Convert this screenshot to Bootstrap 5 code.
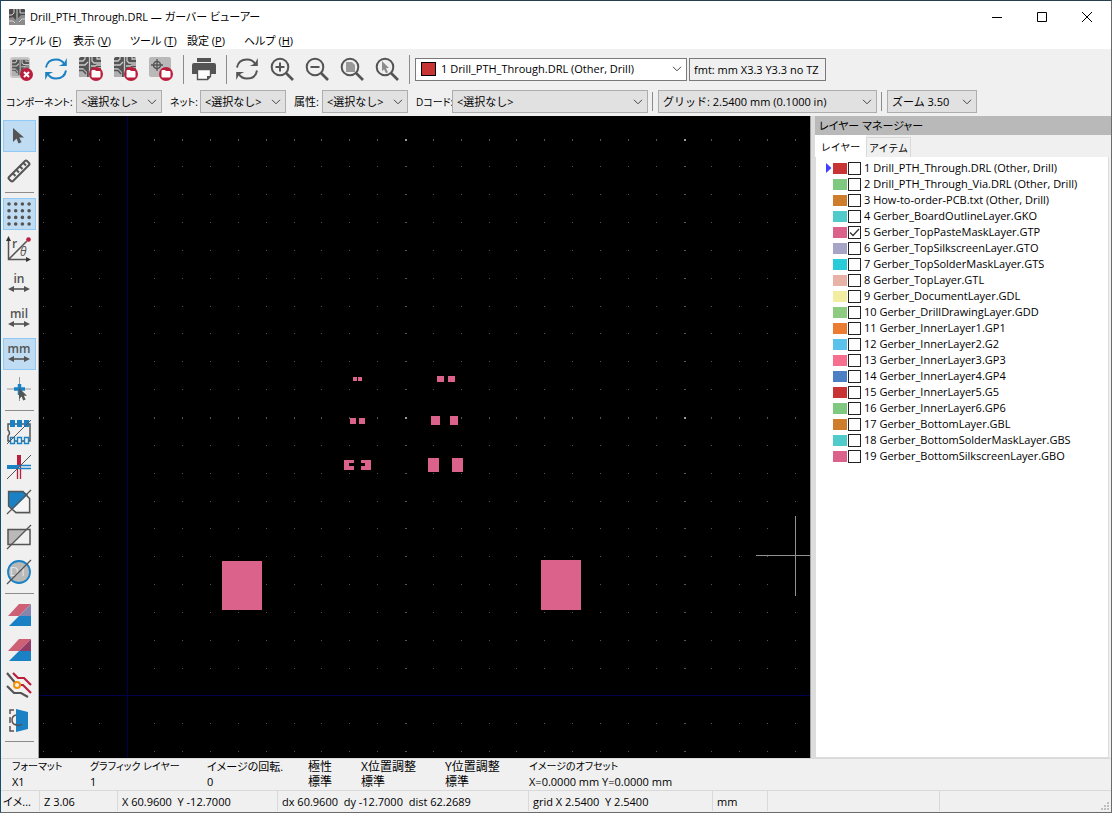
<!DOCTYPE html>
<html lang="ja">
<head>
<meta charset="utf-8">
<meta name="viewport" content="width=device-width, initial-scale=1">
<title>Drill_PTH_Through.DRL — ガーバー ビューアー</title>
<link href="https://cdn.jsdelivr.net/npm/bootstrap@5.3.0/dist/css/bootstrap.min.css" rel="stylesheet">
<style>
  body { font-family: "Open Sans", "Noto Sans CJK JP", sans-serif; font-size: 11px; line-height: 16px; color: #000; background: #f0f0f0; font-feature-settings: "palt"; }
  .app-window { height: 100vh; border: 1px solid #6b6b6b; border-left-color: #14506e; border-top-color: #24404e; overflow: hidden; }
  .text-kana { font-size: 10px; } .text-kanji { font-size: 12px; }
  .title-row { height: 31px; padding-left: 8px; gap: 5px; }
  .win-buttons { margin-right: 2px; }
  .win-btn { width: 45px; height: 28px; border: 0; background: none; padding: 0; display: flex; align-items: center; justify-content: center; }
  .menu-row { height: 17px; line-height: 18px; padding-left: 7px; }
  .menu-row a { color: #000; text-decoration: none; white-space: nowrap; }
  .menu-row .m-wide { width: 65px; } .menu-row .m-std { width: 57px; }
  .tool-row { height: 40px; padding-left: 4px; }
  .tool-group { gap: 2px; }
  .tool-btn { width: 33px; height: 32px; padding: 0 1px 0 0; border: 1px solid transparent; border-radius: 0; background: none; display: flex; align-items: center; justify-content: center; flex: none; }
  .tool-btn.active { background: #c0dcf3; border-color: #90c8f6; }
  .tool-btn svg { width: 24px; height: 24px; overflow: visible; }
  .v-rule { width: 1px; background: #8c8c8c; flex: none; }
  .tool-row .v-rule { height: 29px; margin: 0 4px 0 5px; }
  .filter-row { height: 27px; padding: 0 0 2px 5px; }
  .filter-row label { white-space: nowrap; flex: none; }
  .filter-row .v-rule { height: 19px; margin: 0 5px 0 4px; }
  .win-select { font-size: 11px; line-height: 16px; color: #000; height: 23px; padding: 0 20px 0 4px; border: 1px solid #adadad; border-radius: 0; background-color: #e1e1e1; background-size: 10px 6px; background-position: right 4px center; flex: none;
    background-image: url("data:image/svg+xml,%3Csvg xmlns='http://www.w3.org/2000/svg' viewBox='0 0 10 6'%3E%3Cpath d='M1 .8l4 4 4-4' fill='none' stroke='%23444'/%3E%3C/svg%3E"); }
  .w-pick { width: 86px; } .w-code { width: 196px; } .w-grid { width: 219px; } .w-zoom { width: 90px; } .w-layer { width: 272px; }
  .win-select.w-layer { background-color: #fff; border-color: #7a7a7a; padding-left: 25px; }
  .layer-pick { position: relative; margin: 0 2px 0 1px; }
  .layer-pick i { position: absolute; left: 6px; top: 4px; width: 15px; height: 14px; background: #c83434; border: 1px solid #000; }
  .fmt-box { font-size: 11px; width: 137px; height: 23px; border: 1px solid #7a7a7a; background: #f0f0f0; padding: 0 4px; border-radius: 0; color: #000; }
  .side-bar { width: 38px; padding: 4px 0 0 2px; border-right: 1px solid #a0a0a0; gap: 3px; flex: none; }
  .side-bar hr { width: 29px; height: 1px; margin: 2px 0 2px 2px; border: 0; background: #8c8c8c; opacity: 1; flex: none; }
  .board { background: #000; min-width: 0; overflow: hidden; border-right: 1px solid #a0a0a0; }
  .board svg { display: block; width: 100%; height: 100%; }
  .splitter { width: 4px; background: #dcdcdc; flex: none; }
  .manager { width: 296px; flex: none; }
  .manager h2 { font-size: 11px; line-height: 19px; background: #b9b9b9; margin: 0; padding-left: 4px; font-weight: 400; }
  .tab-strip { height: 22px; }
  .tab-strip .nav-link { color: #000; border-radius: 0; padding: 0; line-height: 20px; width: 45px; height: 20px; background: #f0f0f0; border: 1px solid #d9d9d9; border-bottom: 0; font-size: 10px; }
  .tab-strip .nav-link.active { background: #fff; width: 51px; height: 22px; border-color: #fff; }
  .layer-pane { background: #fff; border: 1px solid #dcdcdc; border-top: 0; padding-top: 3px; margin-right: 2px; min-height: 0; overflow: hidden; }
  .layer-item { height: 16px; padding-left: 10px; white-space: nowrap; }
  .layer-item .mark-col { width: 7px; display: flex; flex: none; }
  .layer-item .chip { width: 14px; height: 11px; margin-right: 1px; flex: none; }
  .layer-item input { appearance: none; width: 13px; height: 13px; margin: 0 3px 0 0; border: 1px solid #222; background: #fff; flex: none; }
  .layer-item input:checked { background: #fff url("data:image/svg+xml,%3Csvg xmlns='http://www.w3.org/2000/svg' viewBox='0 0 11 11'%3E%3Cpath d='M1 5.5l3 3 6-6.500' fill='none' stroke='%23333' stroke-width='1.300'/%3E%3C/svg%3E"); }
  .info-row { height: 32px; border-top: 1px solid #d9d9d9; padding: 0 0 0 11px; line-height: 15px; white-space: nowrap; }
  .info-row dl { margin: 0; flex: none; } .info-row dt { font-weight: 400; } .info-row dd { margin: 0; }
  .i-78 { width: 78px; } .i-117 { width: 117px; } .i-101 { width: 101px; } .i-53 { width: 53px; } .i-84 { width: 84px; }
  .status-row { height: 22px; border-top: 1px solid #d9d9d9; line-height: 22px; white-space: pre; position: relative; }
  .status-row span { padding-left: 4px; border-right: 1px solid #d9d9d9; height: 20px; flex: none; overflow: hidden; }
  .s-39 { width: 39px; } .s-78 { width: 78px; } .s-160 { width: 160px; } .s-251 { width: 251px; } .s-184 { width: 184px; } .s-55 { width: 55px; } .s-172 { width: 172px; }
  .status-row .s-39 { padding-left: 2px; }
  .grip { position: absolute; right: 2px; bottom: 1px; width: 9px; height: 9px; }
</style>
</head>
<body>
<svg width="0" height="0" class="position-absolute" aria-hidden="true">
  <symbol id="pcb" viewBox="0 0 22 20"><rect width="22" height="20" rx="2" fill="#545454"/><path d="M0 11h4l4 4v5H2q-2 0-2-2zM13 13l3-3h6v10h-9z" fill="#b0b0b0"/><path d="M10.500 0v20M0 4h4l2-2V0M0 8h6l3-3M13 0v4l2 2h7M18 0v2h4M12 9h4l2-1h4" fill="none" stroke="#c8c8c8" stroke-width="1.300"/><path d="M0 13.500h4l3 3.500M12 18v-3l3-3h7" fill="none" stroke="#545454" stroke-width="1.500"/></symbol>
  <symbol id="folder" viewBox="0 0 14 14"><circle cx="7" cy="7" r="7" fill="#ba1e3c"/><path d="M2.500 4q0-1 1-1h2.500l1 1H10.500q1 0 1 1V9.500q0 1-1 1h-7q-1 0-1-1z" fill="#fff"/></symbol>
  <symbol id="cycle" viewBox="0 0 24 24"><path d="M2 10.500C3 5 7 2.500 12 2.500c4 0 7 2 8.500 5M22 13.500c-1 5.500-5 8-10 8-4 0-7-2-8.500-5" fill="none" stroke="currentColor" stroke-width="2"/><path d="M22.800 1v8h-8l5-2.500zM1.200 23v-8h8l-5 2.500z" fill="currentColor"/></symbol>
  <symbol id="lens" viewBox="0 0 24 24"><circle cx="10" cy="10" r="8.300" fill="none" stroke="#545454" stroke-width="2"/><path d="M16 16l7 7" stroke="#545454" stroke-width="2.600"/></symbol>
  <symbol id="span" viewBox="0 0 24 8"><path d="M4 4h16" stroke="#545454" stroke-width="1.600"/><path d="M1 4l6-3v6zM23 4l-6-3v6z" fill="#545454"/></symbol>
</svg>

<div class="app-window d-flex flex-column">
  <header class="bg-white">
    <div class="title-row d-flex align-items-center">
      <svg width="16" height="16"><rect width="16" height="16" rx="1" fill="#4a4a4a"/><path d="M0 9l4-1 3 3v5H0zM9 9l3-3h4v10H9z" fill="#8b8b8b"/><path d="M8 0v16M0 6h3l2-2V0M11 0v4h5M0 12h4l2 2M10 13l3-3h3" fill="none" stroke="#d5d5d5"/></svg>
      <span>Drill_PTH_Through.DRL — ガーバー ビューアー</span>
      <div class="win-buttons ms-auto d-flex">
        <button class="win-btn" aria-label="最小化"><svg width="10" height="10"><path d="M0 5.500h10" stroke="#000"/></svg></button>
        <button class="win-btn" aria-label="最大化"><svg width="10" height="10"><path d="M.5.500h9v9h-9z" fill="none" stroke="#000"/></svg></button>
        <button class="win-btn" aria-label="閉じる"><svg width="10" height="10"><path d="M0 0l10 10M10 0L0 10" stroke="#000"/></svg></button>
      </div>
    </div>
    <nav class="menu-row d-flex">
      <a class="m-wide" href="#">ファイル (<u>F</u>)</a><a class="m-std" href="#">表示 (<u>V</u>)</a><a class="m-std" href="#">ツール (<u>T</u>)</a><a class="m-std" href="#">設定 (<u>P</u>)</a><a href="#">ヘルプ (<u>H</u>)</a>
    </nav>
  </header>

  <div class="tool-row d-flex align-items-center" role="toolbar">
    <div class="tool-group d-flex">
      <button class="tool-btn" aria-label="全レイヤーをクリア"><svg viewBox="0 0 24 24"><rect x="1" width="20" height="21" rx="3" fill="#c8c8c8"/><use href="#pcb" x="3" y="2" width="17" height="17"/><circle cx="17.500" cy="17.500" r="6.500" fill="#ba1e3c"/><path d="M15 15l5 5M20 15l-5 5" stroke="#fff" stroke-width="2"/></svg></button>
      <button class="tool-btn" aria-label="再読み込み" style="color:#1a81c4"><svg><use href="#cycle"/></svg></button>
      <button class="tool-btn" aria-label="ガーバーを開く"><svg viewBox="0 0 24 24"><use href="#pcb" width="22" height="20"/><use href="#folder" x="10" y="10" width="14" height="14"/></svg></button>
      <button class="tool-btn" aria-label="ジョブを開く"><svg viewBox="0 0 24 24"><use href="#pcb" width="22" height="20"/><use href="#folder" x="10" y="10" width="14" height="14"/></svg></button>
      <button class="tool-btn" aria-label="ドリルを開く"><svg viewBox="0 0 24 24"><rect width="22" height="20" rx="2" fill="#b9b9b9"/><circle cx="8" cy="8" r="3.500" fill="none" stroke="#545454" stroke-width="1.500"/><path d="M8 2v12M2 8h12" stroke="#545454" stroke-width="1.300"/><use href="#folder" x="10" y="10" width="14" height="14"/></svg></button>
    </div>
    <span class="v-rule"></span>
    <button class="tool-btn" aria-label="印刷"><svg viewBox="0 0 24 24"><path d="M5 1h14v4H5zM2 6h20q2 0 2 2v9h-5v-4H5v4H0V8q0-2 2-2z" fill="#545454"/><path d="M5.500 12.500h13v7l-3 3h-10z" fill="#fff" stroke="#545454" stroke-width="1.400"/><path d="M15 23v-4h4z" fill="#545454"/></svg></button>
    <span class="v-rule"></span>
    <div class="tool-group d-flex">
      <button class="tool-btn" aria-label="再描画" style="color:#545454"><svg><use href="#cycle"/></svg></button>
      <button class="tool-btn" aria-label="ズームイン"><svg viewBox="0 0 24 24"><use href="#lens"/><path d="M10 5.500v9M5.500 10h9" stroke="#545454" stroke-width="2"/></svg></button>
      <button class="tool-btn" aria-label="ズームアウト"><svg viewBox="0 0 24 24"><use href="#lens"/><path d="M5.500 10h9" stroke="#545454" stroke-width="2"/></svg></button>
      <button class="tool-btn" aria-label="全体表示"><svg viewBox="0 0 24 24"><path d="M6 5h6l3 3v7H6z" fill="#999"/><use href="#lens"/></svg></button>
      <button class="tool-btn" aria-label="選択範囲にズーム"><svg viewBox="0 0 24 24"><path d="M7 4l7 7-3 .3 2 4-2 1-2-4-2 2z" fill="#8c8c8c"/><use href="#lens"/></svg></button>
    </div>
    <span class="v-rule"></span>
    <div class="layer-pick"><i></i><select class="form-select win-select w-layer" aria-label="アクティブ レイヤー"><option>1 Drill_PTH_Through.DRL (Other, Drill)</option></select></div>
    <input class="fmt-box" type="text" readonly aria-label="フォーマット" value="fmt: mm X3.3 Y3.3 no TZ">
  </div>

  <div class="filter-row d-flex align-items-center">
    <label for="cmp" class="text-kana" style="width:70px">コンポーネント:</label><select id="cmp" class="form-select win-select w-pick"><option>&lt;選択なし&gt;</option></select>
    <label for="net" class="text-kana ps-2" style="width:38px">ネット:</label><select id="net" class="form-select win-select w-pick"><option>&lt;選択なし&gt;</option></select>
    <label for="att" class="ps-2" style="width:36px">属性:</label><select id="att" class="form-select win-select w-pick"><option>&lt;選択なし&gt;</option></select>
    <label for="dcd" class="text-kana ps-2" style="width:44px">Dコード:</label><select id="dcd" class="form-select win-select w-code"><option>&lt;選択なし&gt;</option></select>
    <span class="v-rule"></span>
    <select class="form-select win-select w-grid" aria-label="グリッド"><option>グリッド: 2.5400 mm (0.1000 in)</option></select>
    <span class="v-rule"></span>
    <select class="form-select win-select w-zoom" aria-label="ズーム"><option>ズーム 3.50</option></select>
  </div>

  <main class="d-flex flex-grow-1" style="min-height:0">
    <div class="side-bar d-flex flex-column" role="toolbar">
      <button class="tool-btn active" aria-label="選択"><svg viewBox="0 0 24 24"><path d="M6 4v14l3.500-3.500 2 5 3-1.200-2.200-4.800H17z" fill="#545454"/></svg></button>
      <button class="tool-btn" aria-label="計測"><svg viewBox="0 0 24 24"><path d="M2 18L18 2q1-1 2 0l2 2q1 1 0 2L6 22q-1 1-2 0l-2-2q-1-1 0-2zM6 14.500l2.500 2.500M9.500 11l2.500 2.500M13 7.500l2.500 2.500M16.500 4l2.500 2.500" fill="none" stroke="#545454" stroke-width="2"/></svg></button>
      <hr>
      <button class="tool-btn active" aria-label="グリッド表示"><svg viewBox="0 0 24 24"><path d="M2 2h21M2 8.700h21M2 15.400h21M2 22h21" stroke="#545454" stroke-width="3.600" stroke-linecap="round" stroke-dasharray="0 6.700"/></svg></button>
      <button class="tool-btn" aria-label="極座標"><svg viewBox="0 0 24 24"><path d="M1.500 2v20.500H21M2 22L20 4" fill="none" stroke="#545454" stroke-width="1.500"/><path d="M1.500-1L4 4h-5zM24 22.500L19 20v5z" fill="#333"/><circle cx="21.500" cy="2.500" r="2.300" fill="#ba1e3c"/><text x="5" y="11" font-size="12" fill="#545454" font-weight="600">r</text><text x="13" y="19" font-size="12" font-style="italic" fill="#545454">θ</text></svg></button>
      <button class="tool-btn" aria-label="インチ"><svg viewBox="0 0 24 24"><text x="12" y="11" text-anchor="middle" font-size="12" font-weight="600" fill="#545454">in</text><use href="#span" y="13" width="24" height="8"/></svg></button>
      <button class="tool-btn" aria-label="ミル"><svg viewBox="0 0 24 24"><text x="12" y="11" text-anchor="middle" font-size="12" font-weight="600" fill="#545454">mil</text><use href="#span" y="13" width="24" height="8"/></svg></button>
      <button class="tool-btn active" aria-label="ミリメートル"><svg viewBox="0 0 24 24"><text x="12" y="11" text-anchor="middle" font-size="12" font-weight="600" fill="#545454">mm</text><use href="#span" y="13" width="24" height="8"/></svg></button>
      <button class="tool-btn" aria-label="カーソル形状"><svg viewBox="0 0 24 24"><path d="M0 12h24M12.500 0v24" stroke="#999"/><path d="M7 12h11M12.500 7v11" stroke="#1a81c4" stroke-width="3.500"/><path d="M12 11v11l2.700-2.500 1.500 4 2.400-1-1.700-3.700H20z" fill="#545454"/></svg></button>
      <hr>
      <button class="tool-btn" aria-label="部品をスケッチ表示"><svg viewBox="0 0 24 24"><path d="M1 4h22v17H1v-5q3-3 0-6z" fill="none" stroke="#545454" stroke-width="1.500"/><path d="M3 0h5v7H3zM10 0h5v7h-5zM17 0h5v7h-5z" fill="#1a81c4"/><path d="M3.500 17.500h4v6h-4zM10.500 17.500h4v6h-4zM17.500 17.500h4v6h-4z" fill="#f0f0f0" stroke="#1a81c4" stroke-width="1.400"/><path d="M0 24L24 0" stroke="#545454"/></svg></button>
      <button class="tool-btn" aria-label="ラインをスケッチ表示"><svg viewBox="0 0 24 24"><path d="M12 0v12" stroke="#ba1e3c" stroke-width="4"/><path d="M10.500 12v12M13.500 12v12" stroke="#ba1e3c" stroke-width="1.300"/><path d="M0 12h12" stroke="#1a81c4" stroke-width="4"/><path d="M12 10.500h12M12 13.500h12" stroke="#1a81c4" stroke-width="1.300"/><path d="M0 24L24 0" stroke="#545454"/></svg></button>
      <button class="tool-btn" aria-label="ポリゴンをスケッチ表示"><svg viewBox="0 0 24 24"><path d="M2 2h14l7 7v14h-14l-7-7z" fill="#f5f5f5" stroke="#c8c8c8" stroke-width="2"/><path d="M1.500 1.500H16l5 3L5 20l-3.500-4z" fill="#1a81c4"/><path d="M6 20l-4.500-4V1.500H16l6.500 7V22.500H9z" fill="none" stroke="#545454" stroke-width="1.300"/><path d="M0 24L24 0" stroke="#545454" stroke-width="1.200"/></svg></button>
      <button class="tool-btn" aria-label="ネガ表示"><svg viewBox="0 0 24 24"><path d="M1 4h19L4 20H1z" fill="#b9b9b9"/><path d="M1 4.500h22v15H1z" fill="none" stroke="#545454" stroke-width="1.500"/><path d="M0 24L24 0" stroke="#545454" stroke-width="1.200"/></svg></button>
      <button class="tool-btn" aria-label="Dコード表示"><svg viewBox="0 0 24 24"><circle cx="12" cy="12" r="11" fill="#b9b9b9" stroke="#1a81c4" stroke-width="1.800"/><text x="11" y="16" text-anchor="middle" font-size="13" fill="#e4e4e4">D1</text><path d="M0 24L24 0" stroke="#545454" stroke-width="1.200"/></svg></button>
      <hr>
      <button class="tool-btn" aria-label="差分モード"><svg viewBox="0 0 24 24"><path d="M12 13h12v10H2z" fill="#1a81c4"/><path d="M12 1h12L12 13H1z" fill="#cd6075"/><path d="M24 1v12H12z" fill="#8585b0"/></svg></button>
      <button class="tool-btn" aria-label="XORモード"><svg viewBox="0 0 24 24"><path d="M12 13h12v10H2z" fill="#1a81c4"/><path d="M12 1h12L12 13H1z" fill="#cd6075"/><path d="M24 1v12H12z" fill="#903c66"/></svg></button>
      <button class="tool-btn" aria-label="高コントラスト"><svg viewBox="0 0 24 24"><path d="M0 0l10 12M0 13l7 7h7l7 4" fill="none" stroke="#545454" stroke-width="2.200"/><path d="M6 0l5 5h6l7 7M10 12h6l8 8" fill="none" stroke="#ba1e3c" stroke-width="2.200"/><circle cx="10" cy="12" r="3" fill="#f0f0f0" stroke="#f29100" stroke-width="2"/></svg></button>
      <button class="tool-btn" aria-label="反転表示"><svg viewBox="0 0 24 24"><path d="M9 1l12 3v17L9 24z" fill="#1a81c4"/><path d="M7 2H3v4M3 9v6M3 18v5h4" fill="none" stroke="#545454" stroke-width="1.500"/><path d="M9 7q-4 1-4 5t4 5M8 16q4 3 7 0" fill="none" stroke="#545454" stroke-width="1.500"/></svg></button>
      <hr>
    </div>

    <div class="board flex-grow-1">
      <svg id="scene" viewBox="39 116 771 642" preserveAspectRatio="xMidYMid slice" shape-rendering="crispEdges" role="img" aria-label="ガーバー表示">
        <path d="M127.500 116v642M39 695.500h771" stroke="#000078" opacity=".65"/>
        <g id="dots" fill="#555"></g>
        <g fill="#db628b">
          <path d="M353 377h4v4h-4zM358 377h4v4h-4zM437 376h7v6h-7zM448 376h7v6h-7z"/>
          <path d="M350 418h6v6h-6zM359 418h6v6h-6zM431 416h9v9h-9zM450 416h8v9h-8z"/>
          <path d="M344 460h10v3h-5v3h5v4h-10zM361 460h10v10h-10v-4h4v-3h-4zM428 458h11v14h-11zM452 458h11v14h-11z"/>
          <path d="M222 561h40v49h-40zM541 560h40v50h-40z"/>
        </g>
        <path d="M756 555.500h54M795.500 516v80" stroke="#929292"/>
      </svg>
    </div>
    <div class="splitter"></div>

    <aside class="manager d-flex flex-column">
      <h2>レイヤー マネージャー</h2>
      <div class="tab-strip nav align-items-end" role="tablist">
        <button class="nav-link active" role="tab">レイヤー</button><button class="nav-link" role="tab">アイテム</button>
      </div>
      <div class="layer-pane flex-grow-1">
        <label class="layer-item d-flex align-items-center"><span class="mark-col"><svg width="6" height="10"><path d="M0 0l5.500 5L0 10z" fill="#4040ff"/></svg></span><span class="chip" style="background:#c83434"></span><input type="checkbox">1 Drill_PTH_Through.DRL (Other, Drill)</label>
        <label class="layer-item d-flex align-items-center"><span class="mark-col"></span><span class="chip" style="background:#7fc87f"></span><input type="checkbox">2 Drill_PTH_Through_Via.DRL (Other, Drill)</label>
        <label class="layer-item d-flex align-items-center"><span class="mark-col"></span><span class="chip" style="background:#ce7d2c"></span><input type="checkbox">3 How-to-order-PCB.txt (Other, Drill)</label>
        <label class="layer-item d-flex align-items-center"><span class="mark-col"></span><span class="chip" style="background:#4fcbcb"></span><input type="checkbox">4 Gerber_BoardOutlineLayer.GKO</label>
        <label class="layer-item d-flex align-items-center"><span class="mark-col"></span><span class="chip" style="background:#db628b"></span><input type="checkbox" checked>5 Gerber_TopPasteMaskLayer.GTP</label>
        <label class="layer-item d-flex align-items-center"><span class="mark-col"></span><span class="chip" style="background:#a7a5c6"></span><input type="checkbox">6 Gerber_TopSilkscreenLayer.GTO</label>
        <label class="layer-item d-flex align-items-center"><span class="mark-col"></span><span class="chip" style="background:#28ccd9"></span><input type="checkbox">7 Gerber_TopSolderMaskLayer.GTS</label>
        <label class="layer-item d-flex align-items-center"><span class="mark-col"></span><span class="chip" style="background:#e8b2a7"></span><input type="checkbox">8 Gerber_TopLayer.GTL</label>
        <label class="layer-item d-flex align-items-center"><span class="mark-col"></span><span class="chip" style="background:#f2eda1"></span><input type="checkbox">9 Gerber_DocumentLayer.GDL</label>
        <label class="layer-item d-flex align-items-center"><span class="mark-col"></span><span class="chip" style="background:#8dcb81"></span><input type="checkbox">10 Gerber_DrillDrawingLayer.GDD</label>
        <label class="layer-item d-flex align-items-center"><span class="mark-col"></span><span class="chip" style="background:#ed7c33"></span><input type="checkbox">11 Gerber_InnerLayer1.GP1</label>
        <label class="layer-item d-flex align-items-center"><span class="mark-col"></span><span class="chip" style="background:#5bc3eb"></span><input type="checkbox">12 Gerber_InnerLayer2.G2</label>
        <label class="layer-item d-flex align-items-center"><span class="mark-col"></span><span class="chip" style="background:#f76f8e"></span><input type="checkbox">13 Gerber_InnerLayer3.GP3</label>
        <label class="layer-item d-flex align-items-center"><span class="mark-col"></span><span class="chip" style="background:#4d7fc4"></span><input type="checkbox">14 Gerber_InnerLayer4.GP4</label>
        <label class="layer-item d-flex align-items-center"><span class="mark-col"></span><span class="chip" style="background:#c83434"></span><input type="checkbox">15 Gerber_InnerLayer5.G5</label>
        <label class="layer-item d-flex align-items-center"><span class="mark-col"></span><span class="chip" style="background:#7fc87f"></span><input type="checkbox">16 Gerber_InnerLayer6.GP6</label>
        <label class="layer-item d-flex align-items-center"><span class="mark-col"></span><span class="chip" style="background:#ce7d2c"></span><input type="checkbox">17 Gerber_BottomLayer.GBL</label>
        <label class="layer-item d-flex align-items-center"><span class="mark-col"></span><span class="chip" style="background:#4fcbcb"></span><input type="checkbox">18 Gerber_BottomSolderMaskLayer.GBS</label>
        <label class="layer-item d-flex align-items-center"><span class="mark-col"></span><span class="chip" style="background:#db628b"></span><input type="checkbox">19 Gerber_BottomSilkscreenLayer.GBO</label>
      </div>
    </aside>
  </main>

  <footer>
    <div class="info-row d-flex">
      <dl class="i-78"><dt class="text-kana">フォーマット</dt><dd>X1</dd></dl>
      <dl class="i-117"><dt class="text-kana">グラフィック レイヤー</dt><dd>1</dd></dl>
      <dl class="i-101"><dt>イメージの回転.</dt><dd>0</dd></dl>
      <dl class="i-53 text-kanji"><dt>極性</dt><dd>標準</dd></dl>
      <dl class="i-84 text-kanji"><dt>X位置調整</dt><dd>標準</dd></dl>
      <dl class="i-84 text-kanji"><dt>Y位置調整</dt><dd>標準</dd></dl>
      <dl><dt class="text-kana">イメージのオフセット</dt><dd>X=0.0000 mm Y=0.0000 mm</dd></dl>
    </div>
    <div class="status-row d-flex"><span class="s-39">イメ...</span><span class="s-78">Z 3.06</span><span class="s-160">X 60.9600  Y -12.7000</span><span class="s-251">dx 60.9600  dy -12.7000  dist 62.2689</span><span class="s-184">grid X 2.5400  Y 2.5400</span><span class="s-55">mm</span><span class="s-172"></span><svg class="grip" viewBox="0 0 9 9" fill="#bfbfbf"><path d="M7 0h2v2H7zM4 3h2v2H4zM7 3h2v2H7zM1 6h2v2H1zM4 6h2v2H4zM7 6h2v2H7z"/></svg></div>
  </footer>
</div>
<script src="https://cdn.jsdelivr.net/npm/bootstrap@5.3.0/dist/js/bootstrap.bundle.min.js"></script>
<script>
  // Grid points every 2.54 mm around the origin; each tenth line is drawn heavier.
  const pitch = 27.85, ox = 127, oy = 695, dots = document.getElementById('dots');
  for (let i = -3; i <= 24; i++) for (let j = -3; j <= 20; j++) {
    if (i === 0 || j === 0) continue;
    const r = document.createElementNS('http://www.w3.org/2000/svg', 'rect');
    const bx = i % 10 === 0, by = j % 10 === 0;
    r.setAttribute('x', Math.floor(ox + i * pitch));
    r.setAttribute('y', Math.floor(oy + 1 - j * pitch));
    r.setAttribute('width', bx ? 2 : 1);
    r.setAttribute('height', by ? 2 : 1);
    if (bx && by) r.setAttribute('fill', '#999');
    dots.appendChild(r);
  }
</script>
</body>
</html>
